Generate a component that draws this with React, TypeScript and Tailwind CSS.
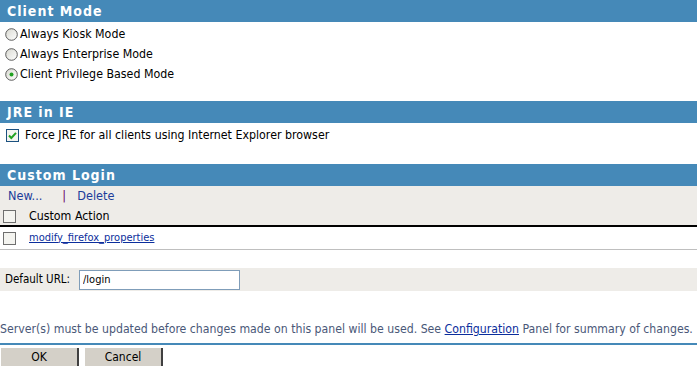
const font = "font-['Tahoma','DejaVu_Sans_Condensed','DejaVu_Sans',sans-serif]";

function SectionHeader({ title }: { title: string }) {
  return (
    <div className="h-[22px] bg-[#4589b8] pl-[7px] flex items-center">
      <span className="text-white font-bold text-[14px] tracking-[1px] leading-none">{title}</span>
    </div>
  );
}

function Radio({ checked }: { checked?: boolean }) {
  return (
    <svg width="13" height="13" viewBox="0 0 13 13" className="shrink-0">
      <defs>
        <linearGradient id="rg" x1="0" y1="0" x2="1" y2="1">
          <stop offset="0" stopColor="#d8d8d0" />
          <stop offset="1" stopColor="#ffffff" />
        </linearGradient>
      </defs>
      <circle cx="6.5" cy="6.5" r="5.8" fill="url(#rg)" stroke="#4c4c4c" strokeWidth="0.9" />
      {checked && <circle cx="6.5" cy="6.5" r="2" fill="#21a121" />}
    </svg>
  );
}

function Checkbox({ checked }: { checked?: boolean }) {
  return (
    <svg width="13" height="13" viewBox="0 0 13 13" className="shrink-0">
      <rect x="0.5" y="0.5" width="12" height="12" fill="#f4f4f0" stroke={checked ? "#1c5180" : "#6f6f6f"} />
      {checked && <path d="M3 6.5 L5.3 9 L10 3.8" fill="none" stroke="#21a121" strokeWidth="2" />}
    </svg>
  );
}

export default function App() {
  const modes = [
    { label: "Always Kiosk Mode", checked: false },
    { label: "Always Enterprise Mode", checked: false },
    { label: "Client Privilege Based Mode", checked: true },
  ];

  return (
    <div className={`${font} w-[697px] h-[366px] bg-white text-[12.3px] text-black overflow-hidden`}>
      <SectionHeader title="Client Mode" />
      <div className="pt-[2px] pl-[5px] flex flex-col">
        {modes.map((m) => (
          <label key={m.label} className="h-[20px] flex items-center gap-[2px]">
            <Radio checked={m.checked} />
            <span>{m.label}</span>
          </label>
        ))}
      </div>

      <div className="mt-[17px]">
        <SectionHeader title="JRE in IE" />
        <div className="h-[24px] pl-[6px] flex items-center gap-[6px]">
          <Checkbox checked />
          <span>Force JRE for all clients using Internet Explorer browser</span>
        </div>
      </div>

      <div className="mt-[17px]">
        <SectionHeader title="Custom Login" />
        <div className="bg-[#eeece8] border-b-2 border-black">
          <div className="h-[21px] pl-[8px] flex items-center text-[#1c3d9b] text-[12.6px]">
            <span>New...</span>
            <span className="ml-[20px] text-[#660066]">|</span>
            <span className="ml-[11px]">Delete</span>
          </div>
          <div className="h-[18px] pl-[3px] flex items-center gap-[13px]">
            <Checkbox />
            <span>Custom Action</span>
          </div>
        </div>
        <div className="h-[23px] pl-[3px] flex items-center gap-[13px] border-b border-[#bfbfbf]">
          <Checkbox />
          <span className="text-[11px] text-[#0b2e9c] underline">modify_firefox_properties</span>
        </div>
      </div>

      <div className="mt-[18px] h-[23px] bg-[#eeece8] flex items-center pl-[5px]">
        <span className="w-[74px] text-[11.5px]">Default URL:</span>
        <input
          defaultValue="/login"
          className="w-[161px] h-[20px] bg-white border border-[#7f9db9] px-[3px] text-[11px] outline-none"
        />
      </div>

      <div className="mt-[29px] text-[12.2px] text-[#4a5878] whitespace-nowrap">
        Server(s) must be updated before changes made on this panel will be used. See{" "}
        <span className="text-[#0b2e9c] underline">Configuration</span> Panel for summary of changes.
      </div>
      <div className="mt-[5px] h-[2px] bg-[#4589b8]" />
      <div className="pt-[3px] pl-[1px] flex gap-[6px]">
        <button className="w-[78px] h-[19px] bg-[#d4d0c8] border-r-2 border-b border-[#404040] text-[12px] leading-none">OK</button>
        <button className="w-[78px] h-[19px] bg-[#d4d0c8] border-r-2 border-b border-[#404040] text-[12px] leading-none">Cancel</button>
      </div>
    </div>
  );
}
